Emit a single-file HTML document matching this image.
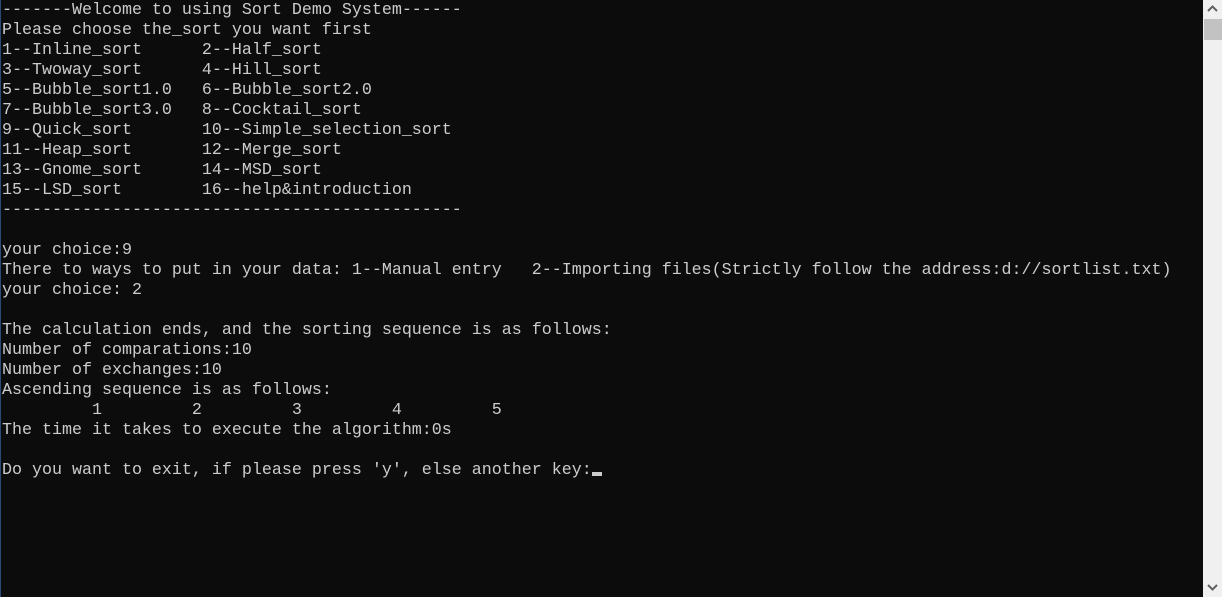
<!DOCTYPE html><html><head><style>
body{margin:0;width:1222px;height:597px;background:#0c0c0c;overflow:hidden;position:relative}
pre{margin:0;position:absolute;left:2px;top:1px;font-family:"Liberation Mono","Noto Sans CJK SC",monospace;font-size:16.67px;line-height:20px;color:#cccccc}
.sb{position:absolute;left:1203px;top:0;width:19px;height:597px;background:#f0f0f0}
.th{position:absolute;left:1px;top:19px;width:18px;height:21px;background:#c2c2c2}
.cur{display:inline-block;width:10px;height:4px;background:#ccc;vertical-align:-2px}
.lb{position:absolute;left:0;top:0;width:1px;height:597px;background:#2a4a7a}
</style></head><body>
<div class="lb"></div>
<pre>-------Welcome to using Sort Demo System------
Please choose the_sort you want first
1--Inline_sort      2--Half_sort
3--Twoway_sort      4--Hill_sort
5--Bubble_sort1.0   6--Bubble_sort2.0
7--Bubble_sort3.0   8--Cocktail_sort
9--Quick_sort       10--Simple_selection_sort
11--Heap_sort       12--Merge_sort
13--Gnome_sort      14--MSD_sort
15--LSD_sort        16--help&amp;introduction
----------------------------------------------

your choice:9
There to ways to put in your data: 1--Manual entry   2--Importing files(Strictly follow the address:d://sortlist.txt)
your choice: 2

The calculation ends, and the sorting sequence is as follows:
Number of comparations:10
Number of exchanges:10
Ascending sequence is as follows:
         1         2         3         4         5
The time it takes to execute the algorithm:0s

Do you want to exit, if please press 'y', else another key:<span class="cur"></span></pre>
<div class="sb"><div class="th"></div>
<svg style="position:absolute;left:4px;top:5px" width="11" height="7"><path d="M1 6L5.5 1.5L10 6" stroke="#606060" stroke-width="2" fill="none"/></svg>
<svg style="position:absolute;left:4px;top:584px" width="11" height="7"><path d="M1 1L5.5 5.5L10 1" stroke="#606060" stroke-width="2" fill="none"/></svg>
</div>
</body></html>
